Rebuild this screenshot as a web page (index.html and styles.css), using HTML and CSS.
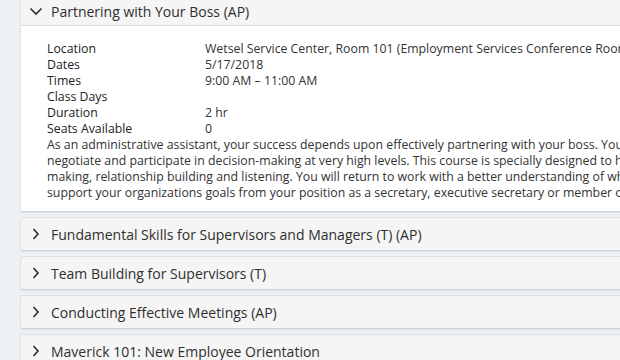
FILE: index.html
```html
<!DOCTYPE html>
<html lang="en">
<head>
    <meta charset="UTF-8">
    <title>Class Schedule</title>
    <link rel="stylesheet" href="styles.css">
</head>
<body>
    <div class="course-list">
        <div class="course open">
            <div class="course-head">
                <svg class="chev" width="14" height="14" viewBox="0 0 14 14"><path d="M1.5 4.5 L7 10 L12.5 4.5" /></svg>
                <span>Partnering with Your Boss (AP)</span>
            </div>
            <div class="course-body">
                <div class="info">
                    <div class="label">Location</div><div>Wetsel Service Center, Room 101 (Employment Services Conference Room)</div>
                    <div class="label">Dates</div><div>5/17/2018</div>
                    <div class="label">Times</div><div>9:00 AM &ndash; 11:00 AM</div>
                    <div class="label">Class Days</div><div></div>
                    <div class="label">Duration</div><div>2 hr</div>
                    <div class="label">Seats Available</div><div>0</div>
                </div>
                <p class="desc">As an administrative assistant, your success depends upon effectively partnering with your boss. You must be able to
                    negotiate and participate in decision-making at very high levels. This course is specially designed to help you with decision-
                    making, relationship building and listening. You will return to work with a better understanding of what it takes to
                    support your organizations goals from your position as a secretary, executive secretary or member of the support staff.</p>
            </div>
        </div>
        <div class="course">
            <div class="course-head">
                <svg class="chev" width="14" height="14" viewBox="0 0 14 14"><path d="M4.5 2 L9 7 L4.5 12" /></svg>
                <span>Fundamental Skills for Supervisors and Managers (T) (AP)</span>
            </div>
        </div>
        <div class="course">
            <div class="course-head">
                <svg class="chev" width="14" height="14" viewBox="0 0 14 14"><path d="M4.5 2 L9 7 L4.5 12" /></svg>
                <span>Team Building for Supervisors (T)</span>
            </div>
        </div>
        <div class="course">
            <div class="course-head">
                <svg class="chev" width="14" height="14" viewBox="0 0 14 14"><path d="M4.5 2 L9 7 L4.5 12" /></svg>
                <span>Conducting Effective Meetings (AP)</span>
            </div>
        </div>
        <div class="course">
            <div class="course-head">
                <svg class="chev" width="14" height="14" viewBox="0 0 14 14"><path d="M4.5 2 L9 7 L4.5 12" /></svg>
                <span>Maverick 101: New Employee Orientation</span>
            </div>
        </div>
    </div>
</body>
</html>
```

FILE: styles.css
```css
html, body {
    margin: 0;
    overflow: hidden;
}
body {
    background: #eef1f4;
    font-family: "Open Sans", "Liberation Sans", sans-serif;
    color: #333;
}
.course-list {
    width: 760px;
    margin-top: -4px;
    padding-left: 20px;
    display: flex;
    flex-direction: column;
    gap: 5px;
}
.course {
    background: #f5f5f5;
    border: 1px solid #dfe2e5;
    border-bottom-color: #cfd4d9;
    border-radius: 3px;
    box-shadow: 0 1px 1px rgba(0, 0, 0, 0.06);
}
.course-head {
    height: 32px;
    display: flex;
    align-items: center;
    padding-left: 8px;
    font-size: 14px;
    color: #2f2f2f;
}
.chev {
    margin-right: 8px;
    fill: none;
    stroke: #2b2b2b;
    stroke-width: 1.6;
}
.open .course-head {
    height: 28px;
    border-bottom: 1px solid #dcdcdc;
}
.course-body {
    background: #fff;
    padding: 15px 26px 10px;
    font-size: 12.3px;
    line-height: 16px;
    border-radius: 0 0 3px 3px;
}
.info {
    display: grid;
    grid-template-columns: 158px 1fr;
    white-space: nowrap;
}
.label {
    color: #222;
}
.desc {
    margin: 0;
    white-space: pre-line;
}
```
